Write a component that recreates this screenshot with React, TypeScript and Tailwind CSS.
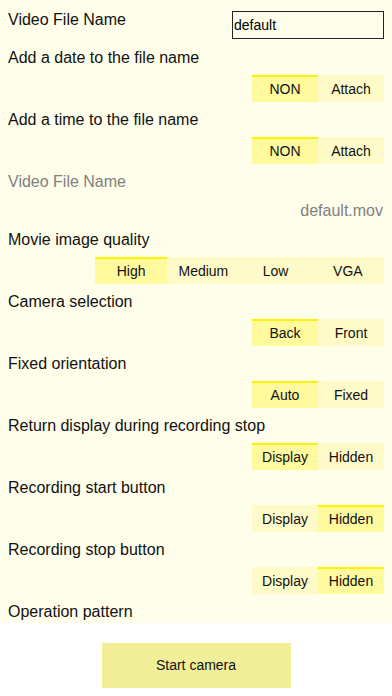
import React from "react";

type SegProps = { options: string[]; selected: number; widthClass: string };

function Segment({ options, selected, widthClass }: SegProps) {
  return (
    <div className="flex justify-end pr-2 h-[27px] shrink-0">
      <div className={`flex h-full ${widthClass}`}>
        {options.map((o, i) => (
          <div
            key={o}
            className={
              i === selected
                ? "flex-1 flex items-center justify-center bg-[#fffa9e] border-t-2 border-[#fff200] text-[14px] text-[#111]"
                : "flex-1 flex items-center justify-center bg-[#fffbc9] border-t-2 border-[#fffbc9] text-[14px] text-[#111]"
            }
          >
            {o}
          </div>
        ))}
      </div>
    </div>
  );
}

function Label({ text }: { text: string }) {
  return (
    <div className="h-[35px] shrink-0 flex items-center pl-2 text-[16px] text-[#111]">{text}</div>
  );
}

export default function App() {
  return (
    <div
      className="w-[392px] h-[696px] bg-white flex flex-col overflow-hidden"
      style={{ fontFamily: '"Liberation Sans", Arial, sans-serif' }}
    >
      <div className="h-[623px] bg-[#fffeeb] overflow-hidden flex flex-col shrink-0">
        <div className="h-[40px] shrink-0 flex justify-between pl-2 pr-2">
          <div className="h-[40px] flex items-center text-[16px] text-[#111]">Video File Name</div>
          <div className="mt-[11px] w-[152px] h-[28px] border border-[#222] flex items-center pl-[1px] text-[14px] text-black">
            default
          </div>
        </div>
        <Label text="Add a date to the file name" />
        <Segment options={["NON", "Attach"]} selected={0} widthClass="w-[132px]" />
        <Label text="Add a time to the file name" />
        <Segment options={["NON", "Attach"]} selected={0} widthClass="w-[132px]" />
        <div className="h-[35px] shrink-0 flex items-center pl-2 text-[16px] text-[#808080]">Video File Name</div>
        <div className="h-[23px] shrink-0 flex items-center justify-end pr-[9px] text-[16px] text-[#808080]">
          default.mov
        </div>
        <Label text="Movie image quality" />
        <Segment options={["High", "Medium", "Low", "VGA"]} selected={0} widthClass="w-[289px]" />
        <Label text="Camera selection" />
        <Segment options={["Back", "Front"]} selected={0} widthClass="w-[132px]" />
        <Label text="Fixed orientation" />
        <Segment options={["Auto", "Fixed"]} selected={0} widthClass="w-[132px]" />
        <Label text="Return display during recording stop" />
        <Segment options={["Display", "Hidden"]} selected={0} widthClass="w-[132px]" />
        <Label text="Recording start button" />
        <Segment options={["Display", "Hidden"]} selected={1} widthClass="w-[132px]" />
        <Label text="Recording stop button" />
        <Segment options={["Display", "Hidden"]} selected={1} widthClass="w-[132px]" />
        <Label text="Operation pattern" />
      </div>
      <div className="flex justify-center pt-[20px]">
        <button className="w-[189px] h-[45px] bg-[#f1ef98] text-[14px] text-[#111] flex items-center justify-center">
          Start camera
        </button>
      </div>
    </div>
  );
}
